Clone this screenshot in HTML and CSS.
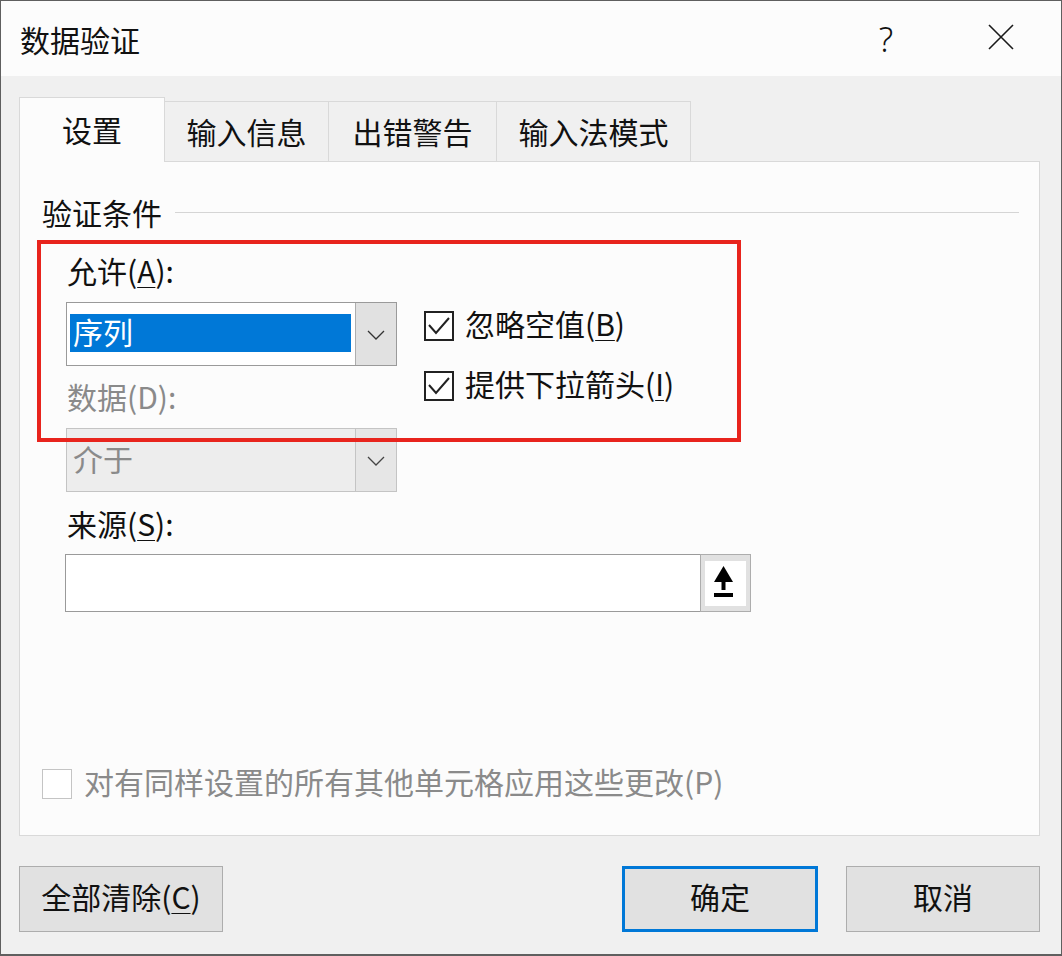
FILE: index.html
```html
<!DOCTYPE html>
<html lang="zh-CN">
<head>
    <meta charset="UTF-8">
    <meta name="viewport" content="width=device-width, initial-scale=1.0">
    <title>数据验证</title>
    <link rel="stylesheet" href="styles.css">
</head>
<body>
    <div class="dialog">
        <div class="titlebar">
            <span class="title">数据验证</span>
            <span class="help">?</span>
            <span class="close">
                <svg width="26" height="26" viewBox="0 0 26 26"><path d="M1 1 L25 25 M25 1 L1 25" stroke="#1a1a1a" stroke-width="1.6" fill="none"/></svg>
            </span>
        </div>

        <div class="content">
            <div class="tabs">
                <div class="tab active">设置</div>
                <div class="tab tab-info">输入信息</div>
                <div class="tab tab-error">出错警告</div>
                <div class="tab tab-ime">输入法模式</div>
            </div>

            <div class="panel">
                <div class="legend">
                    <span class="text">验证条件</span>
                    <span class="rule"></span>
                </div>

                <div class="group">
                    <div class="label">允许(<u>A</u>):</div>
                    <div class="row">
                        <div class="left">
                            <div class="select">
                                <div class="field"><span class="selected">序列</span></div>
                                <div class="drop">
                                    <svg width="18" height="10" viewBox="0 0 18 10"><path d="M1 1 L9 9 L17 1" stroke="#333" stroke-width="1.3" fill="none"/></svg>
                                </div>
                            </div>
                            <div class="label muted">数据(D):</div>
                            <div class="select disabled">
                                <div class="field"><span class="value">介于</span></div>
                                <div class="drop">
                                    <svg width="18" height="10" viewBox="0 0 18 10"><path d="M1 1 L9 9 L17 1" stroke="#444" stroke-width="1.3" fill="none"/></svg>
                                </div>
                            </div>
                        </div>
                        <div class="checks">
                            <div class="check">
                                <span class="box">
                                    <svg width="26" height="26" viewBox="0 0 26 26"><path d="M3 12 L10 20 L23 5" stroke="#222" stroke-width="2" fill="none"/></svg>
                                </span>
                                <span class="text">忽略空值(<u>B</u>)</span>
                            </div>
                            <div class="check">
                                <span class="box">
                                    <svg width="26" height="26" viewBox="0 0 26 26"><path d="M3 12 L10 20 L23 5" stroke="#222" stroke-width="2" fill="none"/></svg>
                                </span>
                                <span class="text">提供下拉箭头(<u>I</u>)</span>
                            </div>
                        </div>
                    </div>

                    <div class="label source-label">来源(<u>S</u>):</div>
                    <div class="source">
                        <div class="source-field"></div>
                        <div class="ref-btn">
                            <svg width="49" height="56" viewBox="0 0 49 56">
                                <rect x="4" y="6" width="41" height="45" fill="#fff"/>
                                <path d="M22.5 11 L32 27 L13 27 Z" fill="#000"/>
                                <rect x="20.5" y="26" width="4" height="9" fill="#000"/>
                                <rect x="13" y="38" width="19" height="4" fill="#000"/>
                            </svg>
                        </div>
                    </div>
                </div>

                <div class="apply">
                    <span class="box light"></span>
                    <span class="text">对有同样设置的所有其他单元格应用这些更改(P)</span>
                </div>
            </div>

            <div class="buttons">
                <div class="btn btn-clear"><span class="text">全部清除(<u>C</u>)</span></div>
                <div class="spacer"></div>
                <div class="btn btn-ok"><span class="text">确定</span></div>
                <div class="btn btn-cancel"><span class="text">取消</span></div>
            </div>
        </div>

        <!-- annotation -->
        <div class="marker"></div>
    </div>
</body>
</html>
```

FILE: styles.css
```css
* {
    box-sizing: border-box;
}
body {
    margin: 0;
    font-family: "Noto Sans CJK SC", "Microsoft YaHei", sans-serif;
    color: #111;
    background: #f0f0f0;
}
.dialog {
    position: relative;
    width: 1062px;
    height: 956px;
    border: 1px solid #5f5f5f;
    border-bottom-width: 2px;
    background: #f0f0f0;
    font-size: 30px;
}
/* Noto sits a little lower than YaHei, lift the text a bit */
.text {
    position: relative;
    top: -3px;
}
.titlebar {
    display: flex;
    align-items: center;
    height: 75px;
    padding: 0 30px 0 19px;
    background: #fcfcfc;
}
.title {
    line-height: 40px;
}
.help {
    margin-left: auto;
    width: 40px;
    text-align: center;
    font-family: "Noto Sans", sans-serif;
    font-size: 34px;
    font-weight: 300;
    line-height: 40px;
}
.close {
    display: flex;
    justify-content: center;
    width: 60px;
    margin-left: 65px;
    margin-top: -3px;
}
.content {
    padding: 0 21px 0 18px;
}
.tabs {
    display: flex;
    align-items: flex-end;
    height: 85px;
    position: relative;
    z-index: 1;
}
.tab {
    height: 60px;
    line-height: 56px;
    text-align: center;
    border: 1px solid #d9d9d9;
    border-left: none;
    border-bottom: none;
    background: #f0f0f0;
    padding-top: 1px;
}
.tab.active {
    width: 146px;
    height: 65px;
    margin-bottom: -1px;
    line-height: 62px;
    padding-top: 0;
    border-left: 1px solid #d9d9d9;
    background: #fcfcfc;
}
.tab-info {
    width: 164px;
}
.tab-error {
    width: 168px;
}
.tab-ime {
    width: 194px;
}
.panel {
    display: flex;
    flex-direction: column;
    height: 675px;
    padding: 31px 20px 31px 22px;
    border: 1px solid #d9d9d9;
    background: #fcfcfc;
}
.legend {
    display: flex;
    align-items: center;
    height: 40px;
}
.legend .text {
    top: -1px;
}
.legend .rule {
    flex: 1;
    height: 1px;
    margin: 0 0 2px 13px;
    background: #d5d5d5;
}
.group {
    padding-left: 24px;
}
.label {
    margin-top: 20px;
    height: 40px;
    line-height: 34px;
    padding-left: 1px;
}
.label.muted {
    margin-top: 13px;
    color: #8a8a8a;
}
.label.source-label {
    margin-top: 14px;
}
u {
    text-underline-offset: 4px;
    text-decoration-thickness: 1px;
}
.row {
    display: flex;
    margin-top: 9px;
}
.left {
    width: 331px;
}
.select {
    display: flex;
    height: 64px;
    margin-top: 9px;
    border: 1px solid #9a9a9a;
    background: #fff;
}
.row .select:first-child {
    margin-top: 0;
}
.field {
    flex: 1;
    padding: 11px 4px 13px 3px;
}
.selected {
    display: block;
    height: 38px;
    line-height: 34px;
    padding-left: 3px;
    background: #0078d7;
    color: #fff;
}
.drop {
    display: flex;
    align-items: center;
    justify-content: center;
    width: 41px;
    background: #e1e1e1;
    border-left: 1px solid #adadad;
    padding-top: 2px;
}
.select.disabled {
    border-color: #c4c4c4;
    background: #ededed;
}
.select.disabled .field {
    padding: 0 0 0 6px;
    line-height: 58px;
    color: #8a8a8a;
}
.select.disabled .drop {
    background: #e6e6e6;
    border-left-color: #c4c4c4;
}
.checks {
    display: flex;
    flex-direction: column;
    gap: 12px;
    margin-left: 27px;
}
.check {
    display: flex;
    align-items: center;
    height: 48px;
}
.box {
    display: inline-block;
    width: 30px;
    height: 30px;
    margin-right: 11px;
    border: 2px solid #222;
    background: #fff;
}
.box svg {
    display: block;
}
.source {
    display: flex;
    width: 686px;
    height: 58px;
    margin-top: 8px;
    margin-left: -1px;
}
.source-field {
    flex: 1;
    border: 1px solid #9a9a9a;
    border-right: none;
    background: #fff;
}
.ref-btn {
    width: 51px;
    border: 1px solid #adadad;
    background: #e1e1e1;
}
.ref-btn svg {
    display: block;
}
.apply {
    display: flex;
    align-items: center;
    height: 40px;
    margin-top: auto;
    color: #8a8a8a;
}
.box.light {
    border: 1px solid #c4c4c4;
    margin-right: 12px;
}
.buttons {
    display: flex;
    height: 66px;
    margin-top: 30px;
}
.spacer {
    flex: 1;
}
.btn {
    display: flex;
    align-items: center;
    justify-content: center;
    border: 1px solid #adadad;
    background: #e1e1e1;
}
.btn-clear {
    width: 204px;
}
.btn-ok {
    width: 196px;
    margin-right: 28px;
    border: 3px solid #0078d7;
}
.btn-cancel {
    width: 194px;
}
.marker {
    position: absolute;
    left: 36px;
    top: 239px;
    width: 704px;
    height: 202px;
    border: 4px solid #e8241d;
    pointer-events: none;
}
```
